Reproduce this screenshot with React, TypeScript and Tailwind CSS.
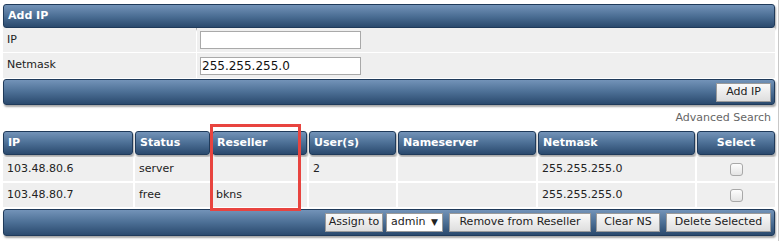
import React from "react";

const bar =
  "rounded-[3px] border border-[#1f3a5a] bg-gradient-to-b from-[#7393b8] via-[#4c6f95] to-[#2b4a6e] shadow-[1px_2px_2px_rgba(0,0,0,0.35)]";

const btn =
  "flex h-[19px] items-center justify-center border border-[#9a9a9a] bg-gradient-to-b from-[#fafafa] to-[#dedede] text-[#222]";

const cols = "grid grid-cols-[130px_75px_95px_87px_138px_157px_78px] gap-x-[2px]";

const rows = [
  { ip: "103.48.80.6", status: "server", reseller: "", users: "2", ns: "", mask: "255.255.255.0" },
  { ip: "103.48.80.7", status: "free", reseller: "bkns", users: "", ns: "", mask: "255.255.255.0" },
];

function Checkbox() {
  return (
    <span className="block h-[13px] w-[13px] rounded-[3px] border border-[#a8a8a8] bg-gradient-to-b from-[#fdfdfd] to-[#e4e4e4]" />
  );
}

export default function App() {
  return (
    <div className="relative h-[241px] w-[779px] border-r border-[#c8c8c8] bg-white pt-[4px] pl-[3px] font-['DejaVu_Sans',Verdana,sans-serif] text-[11px] text-[#222]">
      {/* Add IP form */}
      <div className="w-[772px]">
        <div className={`${bar} flex h-[24px] items-center px-[4px] font-bold text-white`}>Add IP</div>
        <div className="grid h-[25px] grid-cols-[193px_1fr] gap-x-px border-b border-white">
          <div className="flex items-center bg-[#efefef] pl-[4px]">IP</div>
          <div className="flex items-center bg-[#efefef] pl-[3px]">
            <span className="block h-[18px] w-[161px] border border-[#a9a9a9] bg-white" />
          </div>
        </div>
        <div className="grid h-[25px] grid-cols-[193px_1fr] gap-x-px">
          <div className="flex items-center bg-[#efefef] pl-[4px]">Netmask</div>
          <div className="flex items-center bg-[#efefef] pl-[3px]">
            <span className="flex h-[18px] w-[161px] items-center border border-[#a9a9a9] bg-white pl-[1px] text-[12px] text-[#111]">
              255.255.255.0
            </span>
          </div>
        </div>
        <div className={`${bar} mt-px flex h-[26px] items-center justify-end pr-[3px]`}>
          <button className={`${btn} w-[55px]`}>Add IP</button>
        </div>
      </div>

      <div className="flex h-[26px] w-[772px] items-center justify-end pr-[4px] text-[#666]">Advanced Search</div>

      {/* IP table */}
      <div className="w-[772px]">
        <div className={`${cols} h-[24px]`}>
          {["IP", "Status", "Reseller", "User(s)", "Nameserver", "Netmask", "Select"].map((h) => (
            <div
              key={h}
              className={`${bar} flex items-center px-[4px] font-bold text-white ${h === "Select" ? "justify-center" : ""}`}
            >
              {h}
            </div>
          ))}
        </div>
        {rows.map((r) => (
          <div key={r.ip} className={`${cols} mt-px h-[25px] border-t border-white`}>
            <div className="flex items-center bg-[#efefef] pl-[4px]">{r.ip}</div>
            <div className="flex items-center bg-[#efefef] pl-[4px]">{r.status}</div>
            <div className="flex items-center bg-[#efefef] pl-[4px]">{r.reseller}</div>
            <div className="flex items-center bg-[#efefef] pl-[4px]">{r.users}</div>
            <div className="flex items-center bg-[#efefef] pl-[4px]">{r.ns}</div>
            <div className="flex items-center bg-[#efefef] pl-[4px]">{r.mask}</div>
            <div className="flex items-center justify-center bg-[#efefef]">
              <Checkbox />
            </div>
          </div>
        ))}
        <div className={`${bar} mt-[2px] flex h-[27px] items-center justify-end pr-[3px]`}>
          <button className={`${btn} w-[58px]`}>Assign to</button>
          <span className="ml-[3px] flex h-[19px] w-[57px] items-center justify-between border border-[#9a9a9a] bg-white px-[4px]">
            <span>admin</span>
            <span className="text-[9px]">▼</span>
          </span>
          <button className={`${btn} ml-[6px] w-[142px]`}>Remove from Reseller</button>
          <button className={`${btn} ml-[5px] w-[64px]`}>Clear NS</button>
          <button className={`${btn} ml-[6px] w-[105px]`}>Delete Selected</button>
        </div>
      </div>

      {/* annotation box */}
      <div className="absolute top-[124px] left-[210px] h-[87px] w-[91px] border-[3px] border-[#e8443f]" />
    </div>
  );
}
